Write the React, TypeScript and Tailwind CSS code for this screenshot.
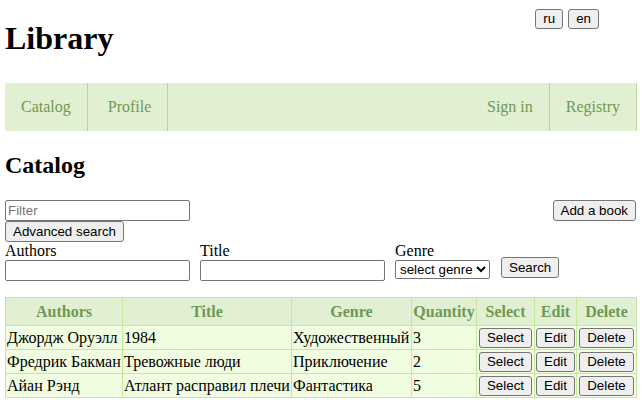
import React from 'react';

const books = [
    { author: 'Джордж Оруэлл', title: '1984', genre: 'Художественный', qty: 3 },
    { author: 'Фредрик Бакман', title: 'Тревожные люди', genre: 'Приключение', qty: 2 },
    { author: 'Айан Рэнд', title: 'Атлант расправил плечи', genre: 'Фантастика', qty: 5 },
];

const btn =
    "px-[7px] text-[13.33px] leading-none bg-[#efefef] border border-[#767676] rounded-[3px] text-black font-['Liberation_Sans',Arial,sans-serif]";
const input =
    "h-[21px] border border-[#767676] rounded-[2px] px-[2px] text-[13.33px] font-['Liberation_Sans',Arial,sans-serif] bg-white";

const App: React.FC = () => {
    return (
        <div className="w-[642px] h-[407px] bg-white text-black font-['Liberation_Serif','Times_New_Roman',serif] px-[5px] overflow-hidden">
            {/* header */}
            <div className="flex justify-between">
                <h1 className="text-[32px] font-bold leading-[37px] mt-[20px]">Library</h1>
                <div className="flex gap-[5px] mt-[9px] mr-[38px]">
                    <button className={`${btn} h-[20px]`}>ru</button>
                    <button className={`${btn} h-[20px]`}>en</button>
                </div>
            </div>

            {/* nav */}
            <nav className="flex h-[48px] mt-[26px] bg-[#e1efd2] text-[16px] text-[#6f9a52]">
                <a className="flex items-center px-[16px] border-r border-[#b5d98f]">Catalog</a>
                <a className="flex items-center pl-[20px] pr-[16px] border-r border-[#b5d98f]">Profile</a>
                <div className="flex-1" />
                <a className="flex items-center px-[16px] border-r border-[#b5d98f]">Sign in</a>
                <a className="flex items-center px-[16px] border-r border-[#b5d98f]">Registry</a>
            </nav>

            <h2 className="text-[24px] font-bold leading-[28px] mt-[20px]">Catalog</h2>

            {/* filter */}
            <div className="flex justify-between mt-[21px]">
                <div className="flex flex-col items-start">
                    <input className={`${input} w-[185px] placeholder:text-[#757575]`} placeholder="Filter" />
                    <button className={`${btn} h-[21px]`}>Advanced search</button>
                </div>
                <button className={`${btn} h-[21px] mr-[1px]`}>Add a book</button>
            </div>

            {/* advanced search */}
            <div className="flex items-end gap-[10px] text-[16px]">
                <label className="flex flex-col leading-[18px]">
                    Authors
                    <input className={`${input} w-[185px]`} />
                </label>
                <label className="flex flex-col leading-[18px]">
                    Title
                    <input className={`${input} w-[185px]`} />
                </label>
                <label className="flex flex-col leading-[18px] mb-[2px]">
                    Genre
                    <select className="h-[19px] w-[95px] border border-[#767676] rounded-[2px] text-[13.33px] font-['Liberation_Sans',Arial,sans-serif] bg-white">
                        <option>select genre</option>
                    </select>
                </label>
                <button className={`${btn} h-[21px] mb-[3px] ml-[1px]`}>Search</button>
            </div>

            {/* table */}
            <table className="mt-[16px] w-[632px] border-collapse border border-[#c5e8a0] text-[16px]">
                <thead>
                    <tr className="bg-[#e1efd2] text-[#6f9a52] font-bold h-[28px]">
                        <th className="border border-[#c5e8a0] w-[117px]">Authors</th>
                        <th className="border border-[#c5e8a0] w-[169px]">Title</th>
                        <th className="border border-[#c5e8a0] w-[120px]">Genre</th>
                        <th className="border border-[#c5e8a0] w-[65px]">Quantity</th>
                        <th className="border border-[#c5e8a0] w-[58px]">Select</th>
                        <th className="border border-[#c5e8a0] w-[39px]">Edit</th>
                        <th className="border border-[#c5e8a0]">Delete</th>
                    </tr>
                </thead>
                <tbody>
                    {books.map((b) => (
                        <tr key={b.title} className="bg-[#f0fde1] h-[24px] leading-[20px]">
                            <td className="border border-[#c5e8a0] px-[1px] py-0 whitespace-nowrap">{b.author}</td>
                            <td className="border border-[#c5e8a0] px-[1px] py-0 whitespace-nowrap">{b.title}</td>
                            <td className="border border-[#c5e8a0] px-[1px] py-0 whitespace-nowrap">{b.genre}</td>
                            <td className="border border-[#c5e8a0] px-[1px] py-0">{b.qty}</td>
                            <td className="border border-[#c5e8a0] px-[1px] py-0 text-center">
                                <button className={`${btn} h-[20px] align-middle`}>Select</button>
                            </td>
                            <td className="border border-[#c5e8a0] px-[1px] py-0 text-center">
                                <button className={`${btn} h-[20px] align-middle`}>Edit</button>
                            </td>
                            <td className="border border-[#c5e8a0] px-[1px] py-0 text-center">
                                <button className={`${btn} h-[20px] align-middle`}>Delete</button>
                            </td>
                        </tr>
                    ))}
                </tbody>
            </table>
        </div>
    );
};

export default App;
